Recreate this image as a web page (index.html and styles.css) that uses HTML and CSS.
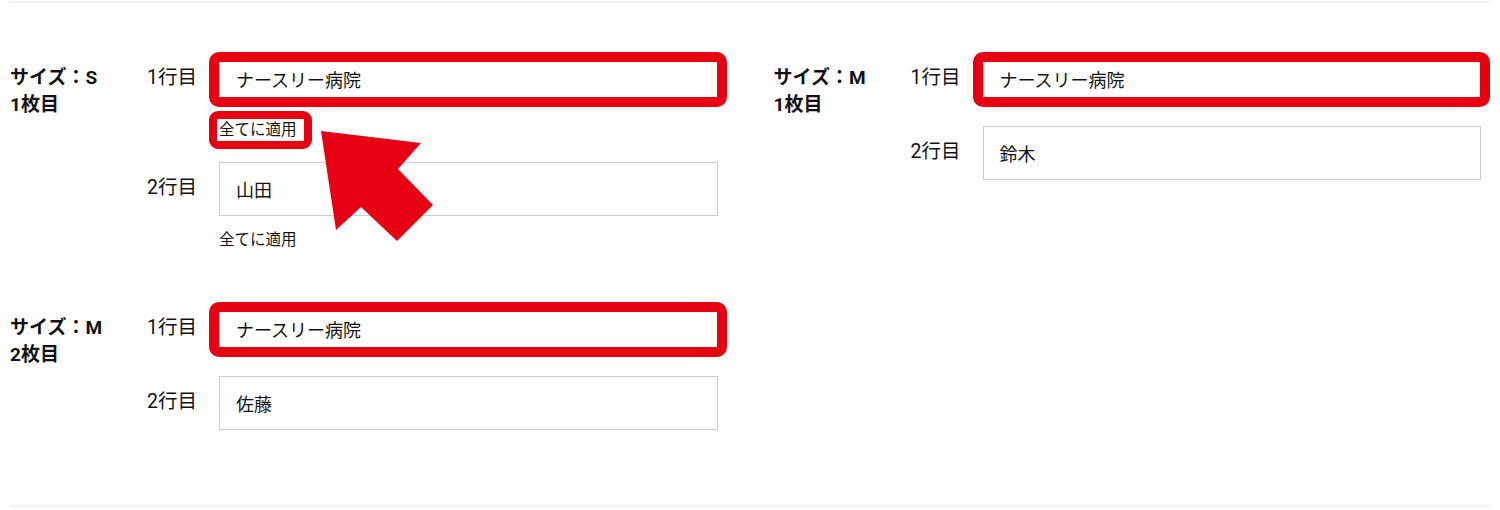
FILE: index.html
```html
<!DOCTYPE html>
<html lang="ja">
<head>
  <meta charset="UTF-8">
  <title>名入れ設定</title>
  <link rel="stylesheet" href="styles.css">
</head>
<body>
  <div class="wrap">
    <div class="sections">

      <div class="section">
        <div class="section-label">サイズ：S<br>1枚目</div>
        <div class="lines">
          <div class="line">
            <div class="line-label">1行目</div>
            <div class="line-body">
              <div class="field is-marked">
                <input type="text" value="ナースリー病院">
              </div>
              <div class="apply"><span class="apply-text is-marked">全てに適用</span></div>
            </div>
          </div>
          <div class="line">
            <div class="line-label">2行目</div>
            <div class="line-body">
              <div class="field">
                <input type="text" value="山田">
              </div>
              <div class="apply"><span class="apply-text">全てに適用</span></div>
            </div>
          </div>
        </div>
      </div>

      <div class="section">
        <div class="section-label">サイズ：M<br>1枚目</div>
        <div class="lines">
          <div class="line">
            <div class="line-label">1行目</div>
            <div class="line-body">
              <div class="field is-marked">
                <input type="text" value="ナースリー病院">
              </div>
            </div>
          </div>
          <div class="line">
            <div class="line-label">2行目</div>
            <div class="line-body">
              <div class="field">
                <input type="text" value="鈴木">
              </div>
            </div>
          </div>
        </div>
      </div>

      <div class="section">
        <div class="section-label">サイズ：M<br>2枚目</div>
        <div class="lines">
          <div class="line">
            <div class="line-label">1行目</div>
            <div class="line-body">
              <div class="field is-marked">
                <input type="text" value="ナースリー病院">
              </div>
            </div>
          </div>
          <div class="line">
            <div class="line-label">2行目</div>
            <div class="line-body">
              <div class="field">
                <input type="text" value="佐藤">
              </div>
            </div>
          </div>
        </div>
      </div>

    </div>

    <svg class="arrow" width="122" height="120" viewBox="0 0 122 120">
      <polygon points="5,5 105,17 82,43 117,79 81,115 45,81 20,104" fill="#e60012"/>
    </svg>
  </div>
</body>
</html>
```

FILE: styles.css
```css
body {
  margin: 0;
  background: #fff;
  color: #111;
  font-family: Roboto, "Noto Sans CJK JP", sans-serif;
}
.wrap {
  position: relative;
  margin: 1px 10px 0;
  padding: 49px 0 75px;
  border-top: 2px solid #f0f0f0;
  border-bottom: 2px solid #f0f0f0;
}
.sections {
  display: grid;
  grid-template-columns: 1fr 1fr;
  column-gap: 47px;
  row-gap: 50px;
  align-items: start;
}
.section {
  display: flex;
  padding-right: 9px;
}
.section-label {
  width: 137px;
  flex-shrink: 0;
  padding-top: 12px;
  font-size: 19px;
  font-weight: bold;
  line-height: 27px;
}
.lines {
  flex: 1;
  display: flex;
  flex-direction: column;
  gap: 20px;
}
.line {
  display: flex;
}
.line-label {
  width: 72px;
  flex-shrink: 0;
  padding-top: 13px;
  font-size: 19.5px;
  line-height: 26px;
}
.line-body {
  flex: 1;
}
.field {
  position: relative;
}
.field input {
  display: block;
  width: 100%;
  height: 54px;
  box-sizing: border-box;
  border: 1px solid #ccc;
  padding: 0 16px;
  font-family: inherit;
  font-size: 18px;
  color: #111;
  background: #fff;
}
.field.is-marked::after {
  content: "";
  position: absolute;
  top: 0;
  bottom: -1px;
  left: -10px;
  right: -9px;
  border: 10px solid #e60012;
  border-radius: 10px;
}
.apply {
  margin-top: 12px;
  line-height: 23px;
}
.apply-text {
  position: relative;
  display: inline-block;
  font-size: 15.5px;
}
.apply-text.is-marked::after {
  content: "";
  position: absolute;
  top: -8px;
  bottom: -7px;
  left: -10px;
  right: -15px;
  border: 8px solid #e60012;
  border-radius: 9px;
}
.arrow {
  position: absolute;
  left: 306px;
  top: 123px;
}
```
